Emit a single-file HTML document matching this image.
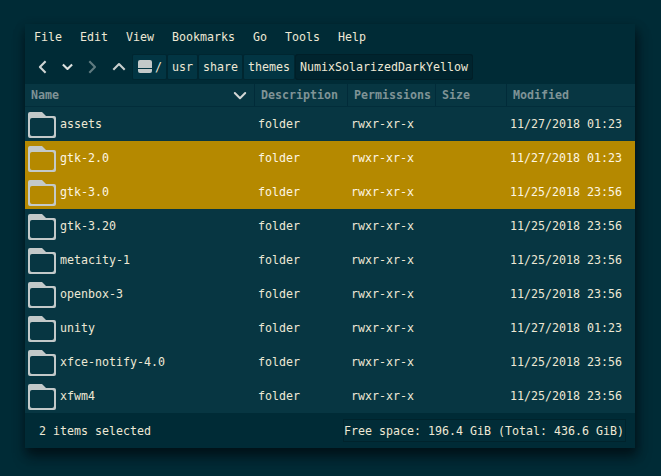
<!DOCTYPE html>
<html lang="en">
<head>
<meta charset="utf-8">
<title>NumixSolarizedDarkYellow</title>
<style>
html,body{margin:0;padding:0;}
body{width:661px;height:476px;overflow:hidden;background:#002b36;position:relative;
  font-family:"DejaVu Sans Mono","Liberation Mono",monospace;font-size:11.63px;color:#eee8d5;}
.win{position:absolute;left:25px;top:24px;width:610px;height:424px;background:#002b36;
  box-shadow:1px 5px 9px 0 rgba(0,8,12,.5),2px 10px 13px 0 rgba(0,8,12,.42);}
.t{position:absolute;white-space:pre;line-height:16px;height:16px;}
.menu .t{top:5px;}
.pb{position:absolute;top:31px;height:24px;background:#023543;border-radius:1px;box-shadow:0 0 0 1px rgba(0,28,38,.3);}
.pb.act{background:#00242e;box-shadow:inset 0 0 0 1px #001f28;border-radius:3px;top:30px;height:26px;}
.hdr{position:absolute;left:0;top:59px;width:610px;height:23px;background:#073642;border-top:1px solid #002b36;box-sizing:border-box;}
.hdr .t{top:3px;color:#7f9396;font-weight:bold;}
.hdr .sep{position:absolute;top:0;width:1px;height:22px;background:#012b39;}
.list{position:absolute;left:0;top:82px;width:610px;height:307px;background:#073642;border-top:1px solid #022d3a;box-sizing:border-box;}
.row{position:absolute;left:0;width:610px;height:34px;}
.row.sel{background:#b58900;color:#fdf6e3;}
.row .t{top:9px;}
.row svg{position:absolute;left:3px;top:5px;}
.c1{left:35px}.c2{left:233px}.c3{left:326px}.c5{left:485px}
.status .t{top:399px;}
.frame{position:absolute;left:318px;top:395px;width:283px;height:23px;border:1px solid #00232c;background:#012c37;box-sizing:border-box;}
</style>
</head>
<body>
<div class="win">
  <div class="menu">
    <span class="t" style="left:9px">File</span>
    <span class="t" style="left:55px">Edit</span>
    <span class="t" style="left:101px">View</span>
    <span class="t" style="left:147px">Bookmarks</span>
    <span class="t" style="left:228px">Go</span>
    <span class="t" style="left:260px">Tools</span>
    <span class="t" style="left:313px">Help</span>
  </div>
  <svg style="position:absolute;left:0;top:30px" width="110" height="26" viewBox="0 0 110 26" fill="none" stroke-width="2.1" stroke-linecap="butt" stroke-linejoin="round">
    <path d="M20.6 7.3 L14.9 13 L20.6 18.7" stroke="#d0d5d4"/>
    <path d="M37.9 10.4 L42.5 15 L47.1 10.4" stroke="#dde1df"/>
    <path d="M64.3 7.3 L70 13 L64.3 18.7" stroke="#5f7b80"/>
    <path d="M88.3 15.7 L94 10 L99.7 15.7" stroke="#c9cfce"/>
  </svg>
  <div class="pb" style="left:108px;width:33px">
    <svg style="position:absolute;left:5px;top:5px" width="14" height="13" viewBox="0 0 14 13"><path d="M2 0h10a2 2 0 0 1 2 2v6h-14V2a2 2 0 0 1 2-2z M0 9h14v2a2 2 0 0 1-2 2h-10a2 2 0 0 1-2-2z" fill="#c3c9c9"/></svg>
    <span class="t" style="left:22px;top:4px">/</span>
  </div>
  <div class="pb" style="left:143px;width:29px"><span class="t" style="left:4px;top:4px">usr</span></div>
  <div class="pb" style="left:174px;width:43px"><span class="t" style="left:4px;top:4px">share</span></div>
  <div class="pb" style="left:219px;width:50px"><span class="t" style="left:4px;top:4px">themes</span></div>
  <div class="pb act" style="left:270px;width:178px"><span class="t" style="left:5px;top:5px">NumixSolarizedDarkYellow</span></div>

  <div class="hdr">
    <span class="t" style="left:6px">Name</span>
    <svg style="position:absolute;left:208px;top:6px" width="14" height="10" viewBox="0 0 14 10" fill="none" stroke="#d3d7d6" stroke-width="2" stroke-linecap="round" stroke-linejoin="round"><path d="M1.8 3 L7 8.2 L12.2 3"/></svg>
    <i class="sep" style="left:229px"></i>
    <span class="t" style="left:236px">Description</span>
    <i class="sep" style="left:322px"></i>
    <span class="t" style="left:329px">Permissions</span>
    <i class="sep" style="left:410px"></i>
    <span class="t" style="left:417px">Size</span>
    <i class="sep" style="left:481px"></i>
    <span class="t" style="left:488px">Modified</span>
  </div>

  <div class="list">
    <div class="row" style="top:0px"><svg width="28" height="26" fill="#c3c9c9"><path fill-rule="evenodd" d="M2 0h12l4 4h8a2 2 0 0 1 2 2v18a2 2 0 0 1-2 2H2a2 2 0 0 1-2-2V2a2 2 0 0 1 2-2z M4 6a2 2 0 0 0-2 2v14a2 2 0 0 0 2 2h20a2 2 0 0 0 2-2V8a2 2 0 0 0-2-2z"/></svg><span class="t c1">assets</span><span class="t c2">folder</span><span class="t c3">rwxr-xr-x</span><span class="t c5">11/27/2018 01:23</span></div>
    <div class="row sel" style="top:34px"><svg width="28" height="26" fill="#c3c9c9"><path fill-rule="evenodd" d="M2 0h12l4 4h8a2 2 0 0 1 2 2v18a2 2 0 0 1-2 2H2a2 2 0 0 1-2-2V2a2 2 0 0 1 2-2z M4 6a2 2 0 0 0-2 2v14a2 2 0 0 0 2 2h20a2 2 0 0 0 2-2V8a2 2 0 0 0-2-2z"/></svg><span class="t c1">gtk-2.0</span><span class="t c2">folder</span><span class="t c3">rwxr-xr-x</span><span class="t c5">11/27/2018 01:23</span></div>
    <div class="row sel" style="top:68px"><svg width="28" height="26" fill="#c3c9c9"><path fill-rule="evenodd" d="M2 0h12l4 4h8a2 2 0 0 1 2 2v18a2 2 0 0 1-2 2H2a2 2 0 0 1-2-2V2a2 2 0 0 1 2-2z M4 6a2 2 0 0 0-2 2v14a2 2 0 0 0 2 2h20a2 2 0 0 0 2-2V8a2 2 0 0 0-2-2z"/></svg><span class="t c1">gtk-3.0</span><span class="t c2">folder</span><span class="t c3">rwxr-xr-x</span><span class="t c5">11/25/2018 23:56</span></div>
    <div class="row" style="top:102px"><svg width="28" height="26" fill="#c3c9c9"><path fill-rule="evenodd" d="M2 0h12l4 4h8a2 2 0 0 1 2 2v18a2 2 0 0 1-2 2H2a2 2 0 0 1-2-2V2a2 2 0 0 1 2-2z M4 6a2 2 0 0 0-2 2v14a2 2 0 0 0 2 2h20a2 2 0 0 0 2-2V8a2 2 0 0 0-2-2z"/></svg><span class="t c1">gtk-3.20</span><span class="t c2">folder</span><span class="t c3">rwxr-xr-x</span><span class="t c5">11/25/2018 23:56</span></div>
    <div class="row" style="top:136px"><svg width="28" height="26" fill="#c3c9c9"><path fill-rule="evenodd" d="M2 0h12l4 4h8a2 2 0 0 1 2 2v18a2 2 0 0 1-2 2H2a2 2 0 0 1-2-2V2a2 2 0 0 1 2-2z M4 6a2 2 0 0 0-2 2v14a2 2 0 0 0 2 2h20a2 2 0 0 0 2-2V8a2 2 0 0 0-2-2z"/></svg><span class="t c1">metacity-1</span><span class="t c2">folder</span><span class="t c3">rwxr-xr-x</span><span class="t c5">11/25/2018 23:56</span></div>
    <div class="row" style="top:170px"><svg width="28" height="26" fill="#c3c9c9"><path fill-rule="evenodd" d="M2 0h12l4 4h8a2 2 0 0 1 2 2v18a2 2 0 0 1-2 2H2a2 2 0 0 1-2-2V2a2 2 0 0 1 2-2z M4 6a2 2 0 0 0-2 2v14a2 2 0 0 0 2 2h20a2 2 0 0 0 2-2V8a2 2 0 0 0-2-2z"/></svg><span class="t c1">openbox-3</span><span class="t c2">folder</span><span class="t c3">rwxr-xr-x</span><span class="t c5">11/25/2018 23:56</span></div>
    <div class="row" style="top:204px"><svg width="28" height="26" fill="#c3c9c9"><path fill-rule="evenodd" d="M2 0h12l4 4h8a2 2 0 0 1 2 2v18a2 2 0 0 1-2 2H2a2 2 0 0 1-2-2V2a2 2 0 0 1 2-2z M4 6a2 2 0 0 0-2 2v14a2 2 0 0 0 2 2h20a2 2 0 0 0 2-2V8a2 2 0 0 0-2-2z"/></svg><span class="t c1">unity</span><span class="t c2">folder</span><span class="t c3">rwxr-xr-x</span><span class="t c5">11/27/2018 01:23</span></div>
    <div class="row" style="top:238px"><svg width="28" height="26" fill="#c3c9c9"><path fill-rule="evenodd" d="M2 0h12l4 4h8a2 2 0 0 1 2 2v18a2 2 0 0 1-2 2H2a2 2 0 0 1-2-2V2a2 2 0 0 1 2-2z M4 6a2 2 0 0 0-2 2v14a2 2 0 0 0 2 2h20a2 2 0 0 0 2-2V8a2 2 0 0 0-2-2z"/></svg><span class="t c1">xfce-notify-4.0</span><span class="t c2">folder</span><span class="t c3">rwxr-xr-x</span><span class="t c5">11/25/2018 23:56</span></div>
    <div class="row" style="top:272px"><svg width="28" height="26" fill="#c3c9c9"><path fill-rule="evenodd" d="M2 0h12l4 4h8a2 2 0 0 1 2 2v18a2 2 0 0 1-2 2H2a2 2 0 0 1-2-2V2a2 2 0 0 1 2-2z M4 6a2 2 0 0 0-2 2v14a2 2 0 0 0 2 2h20a2 2 0 0 0 2-2V8a2 2 0 0 0-2-2z"/></svg><span class="t c1">xfwm4</span><span class="t c2">folder</span><span class="t c3">rwxr-xr-x</span><span class="t c5">11/25/2018 23:56</span></div>
  </div>

  <div class="status">
    <span class="t" style="left:14px">2 items selected</span>
    <div class="frame"></div>
    <span class="t" style="left:319px">Free space: 196.4 GiB (Total: 436.6 GiB)</span>
  </div>
</div>
</body>
</html>
